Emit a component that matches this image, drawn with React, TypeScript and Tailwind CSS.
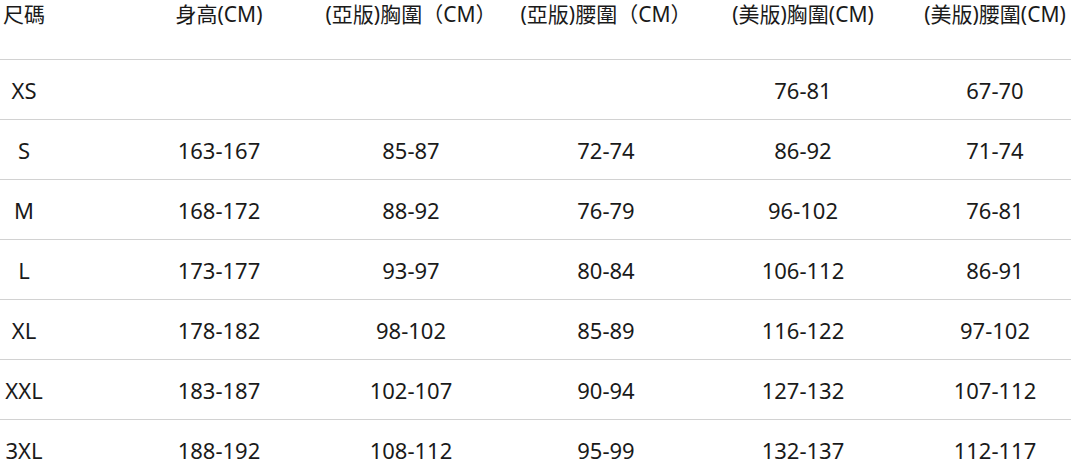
import React from "react";

const headers = [
  "尺碼",
  "身高(CM)",
  "(亞版)胸圍（CM）",
  "(亞版)腰圍（CM）",
  "(美版)胸圍(CM)",
  "(美版)腰圍(CM)",
];

const rows = [
  ["XS", "", "", "", "76-81", "67-70"],
  ["S", "163-167", "85-87", "72-74", "86-92", "71-74"],
  ["M", "168-172", "88-92", "76-79", "96-102", "76-81"],
  ["L", "173-177", "93-97", "80-84", "106-112", "86-91"],
  ["XL", "178-182", "98-102", "85-89", "116-122", "97-102"],
  ["XXL", "183-187", "102-107", "90-94", "127-132", "107-112"],
  ["3XL", "188-192", "108-112", "95-99", "132-137", "112-117"],
];

// column template: size col, spacer, then the five measurement columns
const cols = "grid grid-cols-[48px_74px_194px_190px_200px_194px_190px]";

const App = () => {
  return (
    <div
      className="w-[1071px] h-[471px] overflow-hidden bg-white text-[#1a1a1a] text-[21px]"
      style={{ fontFamily: '"Noto Sans", "Noto Sans CJK TC", sans-serif' }}
    >
      {/* header */}
      <div className={`${cols} h-[60px] border-b border-[#d2d2d2] leading-[28px] whitespace-nowrap`}>
        <div className="text-center">{headers[0]}</div>
        <div />
        {headers.slice(1).map((h) => (
          <div key={h} className="flex justify-center">
            {h}
          </div>
        ))}
      </div>

      {rows.map((r) => (
        <div
          key={r[0]}
          className={`${cols} h-[60px] pt-px border-b border-[#d2d2d2] items-center text-[22px]`}
        >
          <div className="text-center">{r[0]}</div>
          <div />
          {r.slice(1).map((v, i) => (
            <div key={i} className="text-center">
              {v}
            </div>
          ))}
        </div>
      ))}
    </div>
  );
};

export default App;
